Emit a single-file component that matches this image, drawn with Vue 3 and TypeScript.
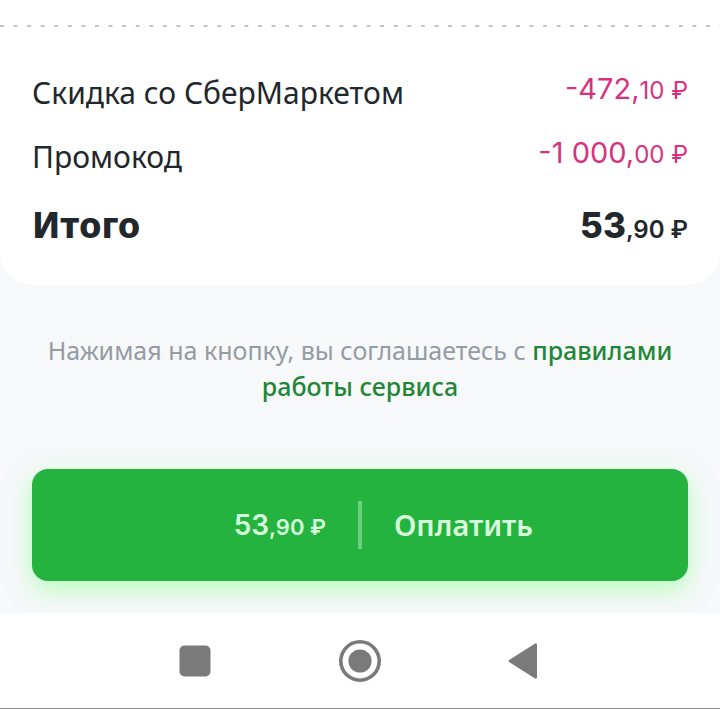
<script setup lang="ts">
interface SummaryRow {
  label: string
  whole: string
  fraction: string
  kind: 'discount' | 'total'
}

const rows: SummaryRow[] = [
  { label: 'Скидка со СберМаркетом', whole: '-472,', fraction: '10 ₽', kind: 'discount' },
  { label: 'Промокод', whole: '-1 000,', fraction: '00 ₽', kind: 'discount' },
  { label: 'Итого', whole: '53', fraction: ',90 ₽', kind: 'total' },
]
</script>

<template>
  <div class="page">
    <main class="checkout">
      <section class="summary">
        <div class="divider"></div>
        <dl class="rows">
          <div v-for="row in rows" :key="row.label" class="row" :class="row.kind">
            <dt>{{ row.label }}</dt>
            <dd>{{ row.whole }}<span class="fraction">{{ row.fraction }}</span></dd>
          </div>
        </dl>
      </section>

      <p class="terms">
        Нажимая на кнопку, вы соглашаетесь с <a href="#">правилами работы сервиса</a>
      </p>

      <button class="pay" type="button">
        <span class="price">53<span class="fraction">,90 ₽</span></span>
        <span class="bar"></span>
        <span class="action">Оплатить</span>
      </button>
    </main>

    <nav class="system-nav">
      <button type="button" aria-label="Недавние приложения">
        <svg viewBox="0 0 44 44"><rect x="6.500" y="6.500" width="31" height="31" rx="5" /></svg>
      </button>
      <button type="button" aria-label="Домой">
        <svg viewBox="0 0 44 44">
          <circle cx="22" cy="22" r="19.2" fill="none" stroke="#7a7a7a" stroke-width="3.6" />
          <circle cx="22" cy="22" r="11.6" />
        </svg>
      </button>
      <button type="button" aria-label="Назад">
        <svg viewBox="0 0 44 44">
          <path d="M6.500 20.800 31.700 4.800Q34 3.400 34 6V38Q34 40.600 31.700 39.200L6.500 23.200Q4.500 22 6.500 20.800Z" />
        </svg>
      </button>
    </nav>
  </div>
</template>

<style>
body {
  margin: 0;
  background: #fff;
}
</style>

<style scoped>
.page {
  display: flex;
  flex-direction: column;
  min-height: 100vh;
  box-sizing: border-box;
  border-bottom: 1px solid #8c8c8c;
  font-family: 'Noto Sans', 'Open Sans', sans-serif;
  color: #22272b;
}

.checkout {
  display: flex;
  flex-direction: column;
  padding-bottom: 32px;
  overflow: hidden;
  background: #f6f8fa;
}

.summary {
  padding: 25px 0 36px;
  border-radius: 0 0 32px 32px;
  background: #fff;
}

.divider {
  height: 2px;
  background: linear-gradient(90deg, #c4c4c6 4px, transparent 4px) 0 0 / calc(100% / 53) 2px repeat-x;
}

.rows {
  display: flex;
  flex-direction: column;
  gap: 24px;
  margin: 0;
  padding: 46px 32px 0;
}

.row {
  display: flex;
  align-items: flex-start;
  justify-content: space-between;
  font-size: 30px;
  line-height: 40px;
}

.row dd {
  margin: 0;
  white-space: nowrap;
}

.row dd,
.price {
  font-family: Inter, 'Noto Sans', sans-serif;
  font-size: 29px;
}

.fraction {
  font-size: 24px;
  line-height: 1;
}

.discount dd {
  line-height: 32px;
  color: #d8327f;
}

.total {
  line-height: 48px;
}

.total dt {
  font-size: 36px;
  font-weight: 800;
}

.total dd {
  font-size: 35px;
  font-weight: 800;
}

.total .fraction {
  font-weight: 600;
}

.terms {
  margin: 0;
  padding: 47px 32px 65px;
  font-size: 25px;
  line-height: 36px;
  text-align: center;
  color: #959ba4;
}

.terms a {
  font-weight: 500;
  color: #238636;
  text-decoration: none;
}

.pay {
  display: grid;
  grid-template-columns: 1fr 4px 1fr;
  column-gap: 32px;
  align-items: center;
  margin: 0 32px;
  padding: 32px 0;
  border: 0;
  border-radius: 16px;
  background: #24b33f;
  box-shadow: 0 8px 24px rgba(130, 255, 130, 0.55);
  color: #d8ffdc;
  font-family: inherit;
  font-size: 29px;
  font-weight: 600;
  line-height: 48px;
}

.pay .price {
  font-size: 28px;
  text-align: right;
}

.pay .fraction {
  font-size: 22px;
}

.bar {
  height: 48px;
  background: #6fd080;
}

.action {
  text-align: left;
}

.system-nav {
  display: flex;
  flex: 1;
  align-items: center;
  justify-content: center;
  gap: 121px;
  padding: 25px 0;
  background: #fff;
}

.system-nav button {
  display: flex;
  padding: 0;
  border: 0;
  background: none;
}

.system-nav svg {
  width: 44px;
  height: 44px;
  fill: #7a7a7a;
}
</style>
